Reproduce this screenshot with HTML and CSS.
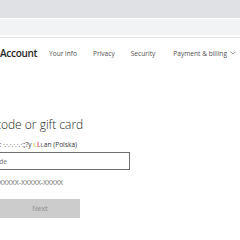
FILE: index.html
```html
<!DOCTYPE html>
<html>
<head>
<meta charset="utf-8">
<link rel="stylesheet" href="styles.css">
</head>
<body>
<div class="chrome-top"></div>
<div class="chrome-bar"></div>
<header class="nav">
  <div class="brand">Account</div>
  <nav class="links">
    <span>Your info</span>
    <span>Privacy</span>
    <span>Security</span>
    <span class="drop">Payment &amp; billing
      <svg width="6" height="4" viewBox="0 0 6 4"><path d="M0.6 0.8 L3 3.1 L5.4 0.8" fill="none" stroke="#777" stroke-width="0.8"/></svg>
    </span>
  </nav>
</header>
<main class="content">
  <h1 class="title">Redeem a code or gift card</h1>
  <div class="region">Kraj/region: ·.·.·.·.·.·:;?y <span class="y">ı.</span><span class="r">Ⅰ</span>.ı.an (Polska)</div>
  <div class="field"><span class="ph">Enter code</span></div>
  <div class="hint">XXXXX-XXXXX-XXXXX-XXXXX-XXXXX</div>
  <button class="next" disabled>Next</button>
</main>
</body>
</html>
```
FILE: styles.css
```css
html, body {
  margin: 0;
  padding: 0;
  background: #fff;
  overflow: hidden;
  width: 240px;
  height: 240px;
}
body {
  font-family: "Open Sans", "Noto Sans", sans-serif;
  color: #262626;
}
.chrome-top {
  height: 18px;
  background: #dfe1e5;
  border-bottom: 1px solid #fff;
}
.chrome-bar {
  height: 16px;
  background: #f1f3f4;
  border-bottom: 2px solid #fff;
  box-shadow: 0 1px 0 #e8e8e8;
}
.nav {
  display: flex;
  align-items: center;
  height: 30px;
  margin-top: 1px;
}
.brand {
  font-size: 10px;
  font-weight: 600;
  color: #262626;
  letter-spacing: -0.3px;
  width: 49px;
  flex: none;
}
.links {
  display: flex;
  gap: 16px;
  font-size: 6.6px;
  color: #505050;
  white-space: nowrap;
}
.drop {
  display: flex;
  align-items: center;
  gap: 3px;
  margin-left: 2px;
}
.content {
  margin-left: -62px;
  padding-top: 49px;
}
.title {
  margin: 0;
  width: 142px;
  text-align: right;
  font-size: 12px;
  font-weight: 300;
  color: #262626;
  line-height: 16px;
  white-space: nowrap;
}
.region {
  margin-top: 7px;
  width: 139px;
  text-align: right;
  font-size: 6.6px;
  color: #333;
  line-height: 10px;
  white-space: nowrap;
}
.region .y { color: #c8a400; }
.region .r { color: #c00; }
.field {
  margin-top: 2px;
  width: 190px;
  height: 16px;
  border: 1px solid #707070;
  box-sizing: content-box;
  display: flex;
  align-items: center;
}
.ph {
  width: 68px;
  text-align: right;
  font-size: 6.6px;
  color: #767676;
  white-space: nowrap;
}
.hint {
  margin-top: 8px;
  width: 125px;
  text-align: right;
  font-size: 6.9px;
  color: #666;
  line-height: 10px;
  white-space: nowrap;
}
.next {
  display: block;
  margin-top: 11px;
  margin-left: 62px;
  width: 80px;
  height: 19px;
  border: none;
  background: #cccccc;
  color: #8a8a8a;
  font-family: "Open Sans", sans-serif;
  font-size: 7px;
  padding: 0;
}
```
